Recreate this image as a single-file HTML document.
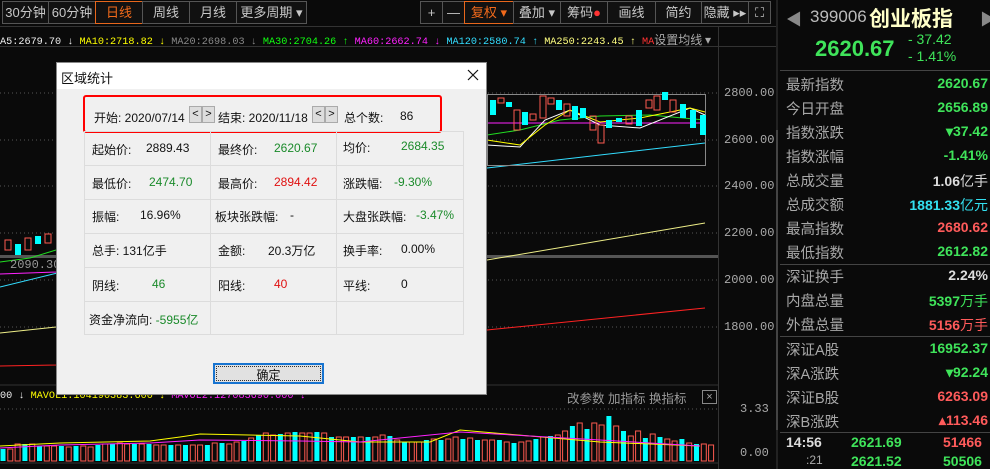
<!DOCTYPE html>
<html><head><meta charset="utf-8"><style>
*{margin:0;padding:0;box-sizing:border-box}
body{width:990px;height:469px;background:#0a0a0a;overflow:hidden;position:relative;font-family:"Liberation Sans","Noto Sans CJK SC",sans-serif;color:#ccc}
.a{position:absolute;white-space:nowrap}
.tb{position:absolute;top:1px;height:23px;border:1px solid #555;font-size:13px;color:#c8c8c8;text-align:center;line-height:21px;background:#111}
.or{border-color:#e8671c;color:#f26a1b}
.ma{font-family:"Liberation Mono","Noto Sans CJK SC",monospace;font-size:10.2px;top:31px}
.ax{font-family:"Liberation Mono",monospace;font-size:12px;color:#aaa;left:724px}
.rl{position:absolute;left:786px;font-size:14.5px;color:#a8a8a8}
.rv{position:absolute;right:2px;font-size:14px;font-weight:bold;text-align:right}
.g{color:#3fe45a}.r{color:#ff5b5b}.w{color:#ddd}.c{color:#33e0f0}
.dlg{position:absolute;left:56px;top:62px;width:431px;height:333px;background:#f0f0f0;border:1px solid #888;color:#111;font-size:12px}
.cell{position:absolute;border:1px solid #dcdcdc;}
.dt{position:absolute;font-size:12px;color:#111}
.btn{position:absolute;width:13px;height:17px;border:1px solid #aaa;background:#ddd;font-size:11px;text-align:center;line-height:15px}
</style></head><body>
<div class="tb" style="left:2px;width:47px">30分钟</div>
<div class="tb" style="left:48px;width:48px">60分钟</div>
<div class="tb or" style="left:95px;width:48px">日线</div>
<div class="tb" style="left:142px;width:48px">周线</div>
<div class="tb" style="left:189px;width:48px">月线</div>
<div class="tb" style="left:236px;width:71px">更多周期 ▾</div>
<div class="tb" style="left:420px;width:23px">+</div>
<div class="tb" style="left:442px;width:23px">—</div>
<div class="tb or" style="left:464px;width:50px">复权 ▾</div>
<div class="tb" style="left:513px;width:48px">叠加 ▾</div>
<div class="tb" style="left:560px;width:48px">筹码<span style="color:#f33">●</span></div>
<div class="tb" style="left:607px;width:49px">画线</div>
<div class="tb" style="left:655px;width:47px">简约</div>
<div class="tb" style="left:701px;width:48px">隐藏 ▸▸</div>
<div class="tb" style="left:748px;width:23px">⛶</div>
<div class="a" style="left:0;top:26px;width:778px;height:1px;background:#333"></div>
<div class="a" style="left:0;top:46px;width:778px;height:1px;background:#333"></div>
<div class="a ma" style="left:0;color:#eee">A5:2679.70 ↓ <span style="color:#ff0">MA10:2718.82 ↓</span> <span style="color:#888">MA20:2698.03 ↓</span> <span style="color:#1f1">MA30:2704.26 ↑</span> <span style="color:#f2f">MA60:2662.74 ↓</span> <span style="color:#3df">MA120:2580.74 ↑</span> <span style="color:#ffff80">MA250:2243.45 ↑</span> <span style="color:#f33">MA</span><span style="color:#aaa;font-family:'Noto Sans CJK SC';font-size:12px">设置均线 ▾</span></div>
<svg class="a" style="left:0;top:0" width="778" height="469" id="sv">
<g stroke="#555" stroke-dasharray="1,3">
<line x1="0" y1="93" x2="718" y2="93"/><line x1="0" y1="140" x2="718" y2="140"/><line x1="0" y1="186" x2="718" y2="186"/><line x1="0" y1="233" x2="718" y2="233"/><line x1="0" y1="280" x2="718" y2="280"/><line x1="0" y1="327" x2="718" y2="327"/><line x1="0" y1="409" x2="718" y2="409"/>
</g>
<rect x="0" y="255" width="718" height="3" fill="#555"/>
<line x1="0" y1="385" x2="718" y2="385" stroke="#333"/>
<line x1="0" y1="463" x2="718" y2="463" stroke="#333"/>
<line x1="718.5" y1="27" x2="718.5" y2="469" stroke="#333"/>
<rect x="776" y="0" width="4" height="469" fill="#222"/><rect x="776" y="130" width="4" height="300" fill="#444"/>
<polyline points="0,287 487,168 705,143" stroke="#3df" fill="none"/>
<polyline points="0,333 56,327 487,260 705,223" stroke="#ee8" fill="none"/>
<polyline points="0,366 56,365 487,330 705,308" stroke="#f22" fill="none"/>
<polyline points="0,274 56,272 487,123 705,123" stroke="#f2f" fill="none"/>
<polyline points="487,135 520,130 560,120 600,116 650,115 705,120" stroke="#2d2" fill="none"/>
<polyline points="0,262 30,258 56,250" stroke="#2d2" fill="none"/>
<polyline points="487,145 520,147 545,120 570,110 600,125 640,128 690,108 705,115" stroke="#fff" fill="none"/>
<polyline points="487,140 520,145 545,125 570,110 600,122 640,118 690,108 705,112" stroke="#ff0" fill="none"/>
<rect x="487.5" y="94.5" width="218" height="71" stroke="#888" fill="none"/>
<g id="cd"></g><g id="vb"></g>
<polyline points="0,446 60,443 150,441 180,437 200,434 300,436 360,442 430,442 460,430 600,442 700,446" stroke="#ff0" fill="none"/>
<polyline points="0,448 60,445 150,443 200,440 300,441 360,442 460,432 600,440 700,446" stroke="#f2f" fill="none"/>
</svg>
<div class="a ax" style="top:86px">2800.00</div><div class="a ax" style="top:133px">2600.00</div><div class="a ax" style="top:179px">2400.00</div><div class="a ax" style="top:226px">2200.00</div><div class="a ax" style="top:273px">2000.00</div><div class="a ax" style="top:320px">1800.00</div><div class="a ax" style="top:402px;left:740px">3.33</div><div class="a ax" style="top:446px;left:740px">0.00</div>
<div class="a" style="left:10px;top:258px;color:#999;font-family:'Liberation Mono';font-size:12px">2090.30</div>
<div class="a ma" style="top:391px;left:0;color:#eee">00 ↓ <span style="color:#ff0">MAVOL1:104190383.600 ↓</span> <span style="color:#f2f">MAVOL2:127083690.000 ↓</span></div>
<div class="a" style="left:567px;top:388px;font-size:12.5px;color:#999">改参数 加指标 换指标</div>
<div class="a" style="left:702px;top:390px;width:15px;height:14px;border:1px solid #888;color:#aaa;font-size:11px;text-align:center;line-height:12px">×</div>
<div class="a" style="left:786px;top:6px;color:#888;font-size:16px">◀</div>
<div class="a" style="left:980px;top:6px;color:#888;font-size:16px">▶</div>
<div class="a" style="left:810px;top:7px;color:#bbb;font-size:17px">399006</div>
<div class="a" style="left:869px;top:3px;color:#ffffc8;font-size:21px;font-weight:bold">创业板指</div>
<div class="a g" style="left:815px;top:36px;font-size:22px;font-weight:bold">2620.67</div>
<div class="a g" style="left:908px;top:31px;font-size:14px">- 37.42</div>
<div class="a g" style="left:908px;top:48px;font-size:14px">- 1.41%</div>
<div class="a" style="left:780px;top:70px;width:210px;height:1px;background:#444"></div>
<div class="a" style="left:780px;top:264px;width:210px;height:1px;background:#444"></div>
<div class="a" style="left:780px;top:336px;width:210px;height:1px;background:#444"></div>
<div class="a" style="left:780px;top:432px;width:210px;height:1px;background:#444"></div>
<div class="rl" style="top:74px">最新指数</div><div class="rv g" style="top:75px">2620.67</div>
<div class="rl" style="top:98px">今日开盘</div><div class="rv g" style="top:99px">2656.89</div>
<div class="rl" style="top:122px">指数涨跌</div><div class="rv g" style="top:123px">▾37.42</div>
<div class="rl" style="top:146px">指数涨幅</div><div class="rv g" style="top:147px">-1.41%</div>
<div class="rl" style="top:170px">总成交量</div><div class="rv w" style="top:171px">1.06<span style="font-weight:normal">亿手</span></div>
<div class="rl" style="top:194px">总成交额</div><div class="rv c" style="top:195px">1881.33<span style="font-weight:normal">亿元</span></div>
<div class="rl" style="top:218px">最高指数</div><div class="rv r" style="top:219px">2680.62</div>
<div class="rl" style="top:242px">最低指数</div><div class="rv g" style="top:243px">2612.82</div>
<div class="rl" style="top:266px">深证换手</div><div class="rv w" style="top:267px">2.24%</div>
<div class="rl" style="top:290px">内盘总量</div><div class="rv g" style="top:291px">5397<span style="font-weight:normal">万手</span></div>
<div class="rl" style="top:314px">外盘总量</div><div class="rv r" style="top:315px">5156<span style="font-weight:normal">万手</span></div>
<div class="rl" style="top:339px">深证A股</div><div class="rv g" style="top:340px">16952.37</div>
<div class="rl" style="top:363px">深A涨跌</div><div class="rv g" style="top:364px">▾92.24</div>
<div class="rl" style="top:387px">深证B股</div><div class="rv r" style="top:388px">6263.09</div>
<div class="rl" style="top:411px">深B涨跌</div><div class="rv r" style="top:412px">▴113.46</div>
<div class="a w" style="left:786px;top:434px;font-size:14px;font-weight:bold">14:56</div>
<div class="a g" style="left:851px;top:434px;font-size:14px;font-weight:bold">2621.69</div>
<div class="a r" style="left:943px;top:434px;font-size:14px;font-weight:bold">51466</div>
<div class="a" style="left:806px;top:453px;font-size:12px;color:#aaa">:21</div>
<div class="a g" style="left:851px;top:453px;font-size:14px;font-weight:bold">2621.52</div>
<div class="a g" style="left:943px;top:453px;font-size:14px;font-weight:bold">50506</div>
<div class="dlg">
<div class="a" style="left:0;top:0;width:429px;height:26px;background:#fff"></div>
<div class="dt" style="left:4px;top:5px;font-size:13px">区域统计</div>
<svg class="a" style="left:410px;top:6px" width="12" height="12"><path d="M1 1L11 11M11 1L1 11" stroke="#111" stroke-width="1.2"/></svg>
<div class="a" style="left:26px;top:32px;width:359px;height:38px;border:2px solid #f00;border-radius:3px"></div>
<div class="dt" style="left:37px;top:46px">开始: 2020/07/14</div>
<div class="btn" style="left:132px;top:43px">&lt;</div><div class="btn" style="left:145px;top:43px">&gt;</div>
<div class="dt" style="left:161px;top:46px">结束: 2020/11/18</div>
<div class="btn" style="left:255px;top:43px">&lt;</div><div class="btn" style="left:268px;top:43px">&gt;</div>
<div class="dt" style="left:287px;top:46px">总个数:</div><div class="dt" style="left:343px;top:46px">86</div>
<div class="cell" style="left:27px;top:68px;width:127px;height:35px"></div><div class="cell" style="left:153px;top:68px;width:127px;height:35px"></div><div class="cell" style="left:279px;top:68px;width:128px;height:35px"></div>
<div class="cell" style="left:27px;top:102px;width:127px;height:35px"></div><div class="cell" style="left:153px;top:102px;width:127px;height:35px"></div><div class="cell" style="left:279px;top:102px;width:128px;height:35px"></div>
<div class="cell" style="left:27px;top:136px;width:127px;height:35px"></div><div class="cell" style="left:153px;top:136px;width:127px;height:35px"></div><div class="cell" style="left:279px;top:136px;width:128px;height:35px"></div>
<div class="cell" style="left:27px;top:170px;width:127px;height:35px"></div><div class="cell" style="left:153px;top:170px;width:127px;height:35px"></div><div class="cell" style="left:279px;top:170px;width:128px;height:35px"></div>
<div class="cell" style="left:27px;top:204px;width:127px;height:35px"></div><div class="cell" style="left:153px;top:204px;width:127px;height:35px"></div><div class="cell" style="left:279px;top:204px;width:128px;height:35px"></div>
<div class="cell" style="left:27px;top:238px;width:127px;height:34px"></div><div class="cell" style="left:153px;top:238px;width:127px;height:34px"></div><div class="cell" style="left:279px;top:238px;width:128px;height:34px"></div>
<div class="dt" style="left:35px;top:78px">起始价:</div><div class="dt" style="left:89px;top:78px">2889.43</div>
<div class="dt" style="left:161px;top:78px">最终价:</div><div class="dt" style="left:217px;top:78px;color:#1a8a2a">2620.67</div>
<div class="dt" style="left:286px;top:76px">均价:</div><div class="dt" style="left:344px;top:76px;color:#1a8a2a">2684.35</div>
<div class="dt" style="left:35px;top:112px">最低价:</div><div class="dt" style="left:92px;top:112px;color:#1a8a2a">2474.70</div>
<div class="dt" style="left:161px;top:112px">最高价:</div><div class="dt" style="left:217px;top:112px;color:#e01010">2894.42</div>
<div class="dt" style="left:286px;top:112px">涨跌幅:</div><div class="dt" style="left:337px;top:112px;color:#1a8a2a">-9.30%</div>
<div class="dt" style="left:35px;top:145px">振幅:</div><div class="dt" style="left:83px;top:145px">16.96%</div>
<div class="dt" style="left:158px;top:145px">板块张跌幅:</div><div class="dt" style="left:233px;top:145px">-</div>
<div class="dt" style="left:286px;top:145px">大盘张跌幅:</div><div class="dt" style="left:359px;top:145px;color:#1a8a2a">-3.47%</div>
<div class="dt" style="left:35px;top:179px">总手: 131亿手</div>
<div class="dt" style="left:161px;top:179px">金额:</div><div class="dt" style="left:211px;top:179px">20.3万亿</div>
<div class="dt" style="left:286px;top:179px">换手率:</div><div class="dt" style="left:344px;top:179px">0.00%</div>
<div class="dt" style="left:35px;top:214px">阴线:</div><div class="dt" style="left:95px;top:214px;color:#1a8a2a">46</div>
<div class="dt" style="left:161px;top:214px">阳线:</div><div class="dt" style="left:217px;top:214px;color:#e01010">40</div>
<div class="dt" style="left:286px;top:214px">平线:</div><div class="dt" style="left:344px;top:214px">0</div>
<div class="dt" style="left:32px;top:248px">资金净流向: <span style="color:#1a8a2a">-5955亿</span></div>
<div class="a" style="left:156px;top:300px;width:111px;height:21px;border:2px solid #1874d0;background:#e1e1e1;text-align:center;font-size:12px;line-height:16px;color:#111"><div style="margin:1px;border:1px dotted #333;height:15px">确定</div></div>
</div>
<script>
var ns="http://www.w3.org/2000/svg",vb=document.getElementById('vb'),cd=document.getElementById('cd');
var h=[12,12,17,17,17,15,15,15,15,14,15,15,14,16,17,17,18,17,17,17,17,16,16,16,16,16,16,16,16,18,18,17,19,20,23,26,28,26,27,28,29,28,28,29,28,24,24,24,24,24,24,24,26,25,21,19,19,19,21,22,21,22,24,22,23,21,21,21,21,19,18,19,20,22,24,25,26,30,35,38,32,38,36,45,35,30,25,30,23,27,24,22,20,22,18,17,17,16];
for(var i=0;i<h.length;i++){var r=document.createElementNS(ns,'rect');var up=(i*7+3)%5<3;r.setAttribute('x',i*7.3+0.5);r.setAttribute('y',461-h[i]);r.setAttribute('width',5);r.setAttribute('height',h[i]);if(up){r.setAttribute('fill','none');r.setAttribute('stroke','#ff5a50');}else r.setAttribute('fill','#0ff');vb.appendChild(r);}
var c=[[490,100,115,0],[498,98,103,1],[506,102,107,0],[514,110,130,1],[522,112,125,0],[530,114,120,1],[540,96,118,1],[548,98,104,1],[556,100,110,0],[564,104,116,1],[572,106,120,0],[580,108,118,0],[590,116,130,1],[598,125,143,1],[606,120,128,0],[616,118,122,0],[626,116,124,1],[636,110,126,0],[646,100,108,1],[654,96,110,1],[662,92,100,0],[670,100,112,1],[680,104,118,0],[690,110,128,0],[700,115,135,0],[5,240,250,1],[15,244,255,0],[25,238,250,1],[35,236,244,0],[45,234,243,1]];
c.forEach(function(a){var r=document.createElementNS(ns,'rect');r.setAttribute('x',a[0]);r.setAttribute('y',a[1]);r.setAttribute('width',6);r.setAttribute('height',a[2]-a[1]);if(a[3]){r.setAttribute('fill','none');r.setAttribute('stroke','#ff5a50');}else r.setAttribute('fill','#0ff');cd.appendChild(r);});
</script>
</body></html>
